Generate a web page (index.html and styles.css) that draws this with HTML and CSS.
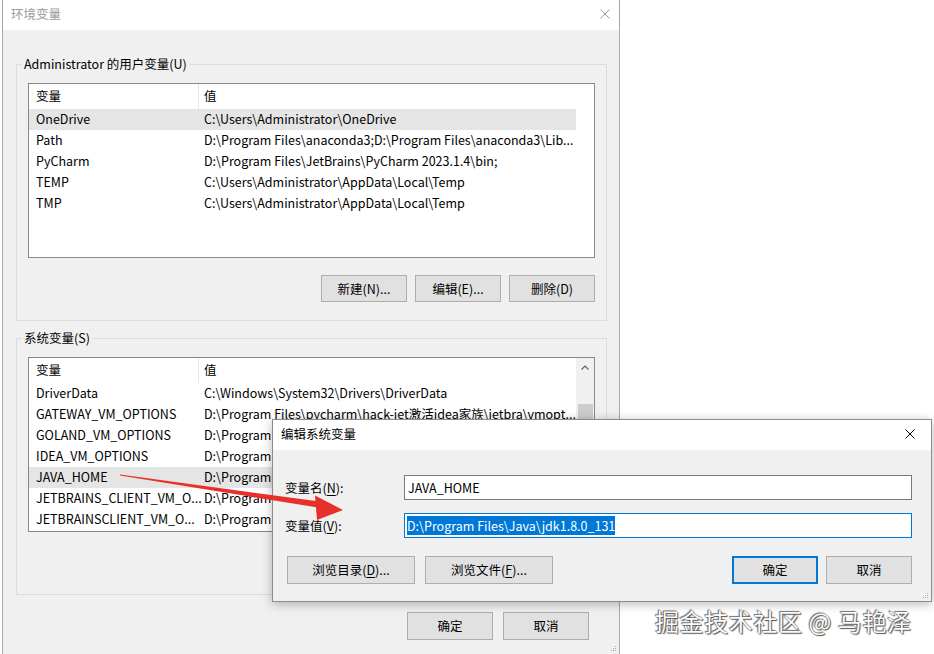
FILE: index.html
```html
<!DOCTYPE html>
<html lang="zh-CN">
<head>
<meta charset="utf-8">
<title>环境变量</title>
<link rel="stylesheet" href="styles.css">
</head>
<body>
<div class="desktop">
  <div class="window main">
    <div class="titlebar">
      <span class="title inactive">环境变量</span>
      <svg class="close inactive-x" viewBox="0 0 10 10" width="10" height="10"><path d="M0.5 0.5 L9.5 9.5 M9.5 0.5 L0.5 9.5" /></svg>
    </div>
    <div class="client">
      <div class="group">
        <div class="group-title">Administrator 的用户变量(U)</div>
        <div class="list">
          <div class="list-main">
            <div class="list-head"><div class="c1">变量</div><div class="c2">值</div></div>
            <div class="row sel"><div class="c1">OneDrive</div><div class="c2">C:\Users\Administrator\OneDrive</div></div>
            <div class="row"><div class="c1">Path</div><div class="c2">D:\Program Files\anaconda3;D:\Program Files\anaconda3\Lib...</div></div>
            <div class="row"><div class="c1">PyCharm</div><div class="c2">D:\Program Files\JetBrains\PyCharm 2023.1.4\bin;</div></div>
            <div class="row"><div class="c1">TEMP</div><div class="c2">C:\Users\Administrator\AppData\Local\Temp</div></div>
            <div class="row"><div class="c1">TMP</div><div class="c2">C:\Users\Administrator\AppData\Local\Temp</div></div>
          </div>
        </div>
        <div class="btn-row">
          <button class="btn">新建(N)...</button>
          <button class="btn">编辑(E)...</button>
          <button class="btn">删除(D)</button>
        </div>
      </div>

      <div class="group group-sys">
        <div class="group-title">系统变量(S)</div>
        <div class="list">
          <div class="list-main">
            <div class="list-head"><div class="c1">变量</div><div class="c2">值</div></div>
            <div class="row"><div class="c1">DriverData</div><div class="c2">C:\Windows\System32\Drivers\DriverData</div></div>
            <div class="row"><div class="c1">GATEWAY_VM_OPTIONS</div><div class="c2">D:\Program Files\pycharm\hack-jet激活idea家族\jetbra\vmopt...</div></div>
            <div class="row"><div class="c1">GOLAND_VM_OPTIONS</div><div class="c2">D:\Program Files\pycharm\hack-jet激活idea家族\jetbra\vmopt...</div></div>
            <div class="row"><div class="c1">IDEA_VM_OPTIONS</div><div class="c2">D:\Program Files\pycharm\hack-jet激活idea家族\jetbra\vmopt...</div></div>
            <div class="row sel"><div class="c1">JAVA_HOME</div><div class="c2">D:\Program Files\Java\jdk1.8.0_131</div></div>
            <div class="row"><div class="c1">JETBRAINS_CLIENT_VM_O...</div><div class="c2">D:\Program Files\pycharm\hack-jet激活idea家族\jetbra\vmopt...</div></div>
            <div class="row"><div class="c1">JETBRAINSCLIENT_VM_O...</div><div class="c2">D:\Program Files\pycharm\hack-jet激活idea家族\jetbra\vmopt...</div></div>
          </div>
          <div class="scrollbar">
            <div class="sb-up"><svg viewBox="0 0 8 5" width="8" height="5"><path d="M0.5 4.5 L4 1 L7.5 4.5" /></svg></div>
            <div class="sb-thumb"></div>
          </div>
        </div>
      </div>

      <div class="btn-row main-btns">
        <button class="btn tall">确定</button>
        <button class="btn tall">取消</button>
      </div>
    </div>
    <svg class="grip main-grip" viewBox="0 0 6 6" width="6" height="6"><rect x="4" y="0" width="1" height="1"/><rect x="2" y="2" width="1" height="1"/><rect x="4" y="2" width="1" height="1"/><rect x="0" y="4" width="1" height="1"/><rect x="2" y="4" width="1" height="1"/><rect x="4" y="4" width="1" height="1"/></svg>
  </div>

  <div class="dialog">
    <div class="titlebar">
      <span class="title">编辑系统变量</span>
      <svg class="close" viewBox="0 0 10 10" width="10" height="10"><path d="M0.5 0.5 L9.5 9.5 M9.5 0.5 L0.5 9.5" /></svg>
    </div>
    <div class="dlg-body">
      <div class="field-row">
        <div class="label">变量名(<u>N</u>):</div>
        <div class="input"><span class="text-name">JAVA_HOME</span></div>
      </div>
      <div class="field-row">
        <div class="label">变量值(<u>V</u>):</div>
        <div class="input focus"><span class="selection">D:\Program Files\Java\jdk1.8.0_131</span></div>
      </div>
      <div class="dlg-btns">
        <button class="btn tall wide">浏览目录(<u>D</u>)...</button>
        <button class="btn tall wide">浏览文件(<u>F</u>)...</button>
        <div class="spacer"></div>
        <button class="btn tall default">确定</button>
        <button class="btn tall">取消</button>
      </div>
    </div>
    <svg class="grip dlg-grip" viewBox="0 0 6 6" width="6" height="6"><rect x="4" y="0" width="1" height="1"/><rect x="2" y="2" width="1" height="1"/><rect x="4" y="2" width="1" height="1"/><rect x="0" y="4" width="1" height="1"/><rect x="2" y="4" width="1" height="1"/><rect x="4" y="4" width="1" height="1"/></svg>
  </div>

  <svg class="arrow" viewBox="0 0 934 654" width="934" height="654">
    <polygon points="120,474.6 120,475.6 318,507.5 319.5,501.5" />
    <polygon points="315,495.5 343,510 317,520" />
  </svg>

  <div class="watermark">掘金技术社区 @ 马艳泽</div>
</div>
</body>
</html>
```

FILE: styles.css
```css
* { box-sizing: border-box; }
html, body { margin: 0; padding: 0; }
body {
  width: 934px;
  height: 654px;
  overflow: hidden;
  background: #fff;
  font-family: "Noto Sans CJK SC", "Noto Sans", sans-serif;
  font-size: 12.5px;
  color: #000;
}
u { text-decoration: underline; text-underline-offset: 2px; }

.desktop { position: relative; width: 934px; height: 654px; overflow: hidden; }

.main {
  position: relative;
  margin-left: 2px;
  width: 618px;
  height: 654px;
  border-left: 1px solid #a8a8a8;
  border-right: 1px solid #a8a8a8;
  background: #f0f0f0;
  display: flex;
  flex-direction: column;
}

.titlebar {
  flex: none;
  height: 30px;
  background: #fff;
  display: flex;
  align-items: center;
  justify-content: space-between;
  padding: 0 9px 2px 8px;
}
.title { line-height: 16px; }
.title.inactive { color: #9a9a9a; }
.close path { stroke: #000; stroke-width: 1; fill: none; }
.inactive-x path { stroke: #9a9a9a; }

.client {
  display: flex;
  flex-direction: column;
  padding: 34px 12px 0 13px;
}

.group {
  border: 1px solid #dcdcdc;
  display: flex;
  flex-direction: column;
  padding: 0 11px 18px 11px;
}
.group-sys { margin-top: 17px; padding-bottom: 62px; }
.group-title {
  align-self: flex-start;
  margin: -10px 0 0 -6px;
  padding: 0 2px;
  line-height: 17px;
  height: 18px;
  background: #f0f0f0;
}

.list {
  margin-top: 10px;
  height: 175px;
  border: 1px solid #828790;
  background: #fff;
  display: flex;
  overflow: hidden;
}
.list-main { width: 547px; flex: none; display: flex; flex-direction: column; }
.list-head { flex: none; height: 25px; display: flex; }
.list-head > div { display: flex; align-items: center; padding-bottom: 2px; }
.list-head .c1 { border-right: 1px solid #e5e5e5; }
.c1 { flex: none; width: 170px; padding-left: 7px; white-space: nowrap; overflow: visible; }
.c2 { flex: 1; padding-left: 5px; white-space: nowrap; overflow: hidden; }
.row { flex: none; height: 21px; display: flex; align-items: center; padding-bottom: 2px; }
.row.sel { background: #e5e5e5; }

.scrollbar {
  flex: none;
  width: 18px;
  background: #f0f0f0;
  display: flex;
  flex-direction: column;
  align-items: center;
}
.sb-up { width: 100%; height: 19px; display: flex; align-items: center; justify-content: center; }
.sb-up path { stroke: #606060; stroke-width: 1.2; fill: none; }
.sb-thumb { margin-top: 27px; width: 15px; height: 70px; background: #cdcdcd; }

.btn-row { display: flex; justify-content: flex-end; gap: 8px; margin-top: 17px; }
.btn {
  width: 86px;
  height: 27px;
  padding: 0 0 1px;
  background: #e1e1e1;
  border: 1px solid #adadad;
  font: inherit;
  color: #000;
}
.btn.tall { height: 28px; }
.btn.wide { width: 128px; }
.btn.default { border: 2px solid #0078d7; }
.main-btns { gap: 10px; margin-right: 18px; }

.grip { position: absolute; }
.grip rect { fill: #b0b0b0; }
.main-grip { right: 2px; bottom: 2px; }
.dlg-grip { right: 2px; bottom: 2px; }

.dialog {
  position: absolute;
  left: 272px;
  top: 419px;
  width: 660px;
  height: 183px;
  border: 1px solid #8c8c8c;
  background: #f0f0f0;
  box-shadow: 0 2px 10px rgba(0, 0, 0, 0.28);
  display: flex;
  flex-direction: column;
}
.dialog .titlebar { padding: 0 16px 3px 8px; }
.dlg-body { display: flex; flex-direction: column; padding: 25px 19px 16px 12px; }
.field-row { display: flex; align-items: center; }
.field-row + .field-row { margin-top: 13px; }
.label { flex: none; width: 119px; padding-bottom: 1px; }
.input {
  flex: 1;
  height: 25px;
  background: #fff;
  border: 1px solid #7a7a7a;
  display: flex;
  align-items: center;
  padding-left: 2px;
  padding-bottom: 1px;
}
.input.focus { border-color: #0078d7; }
.text-name { padding-left: 1px; }
.selection { background: #0078d7; color: #fff; line-height: 19px; }
.dlg-btns { display: flex; gap: 10px; margin-top: 18px; padding-left: 2px; }
.dlg-btns .spacer { flex: 1; }
.dlg-btns .default { margin-right: -2px; }

.arrow { position: absolute; left: 0; top: 0; pointer-events: none; }
.arrow polygon { fill: #e8302a; }

.watermark {
  position: absolute;
  left: 655px;
  top: 605px;
  font-size: 24px;
  line-height: 32px;
  letter-spacing: 0.6px;
  color: #fbfbfb;
  white-space: nowrap;
  text-shadow: 0 0 1px #444, 1px 1px 1px #555, -1px -1px 1px #777;
}
```
